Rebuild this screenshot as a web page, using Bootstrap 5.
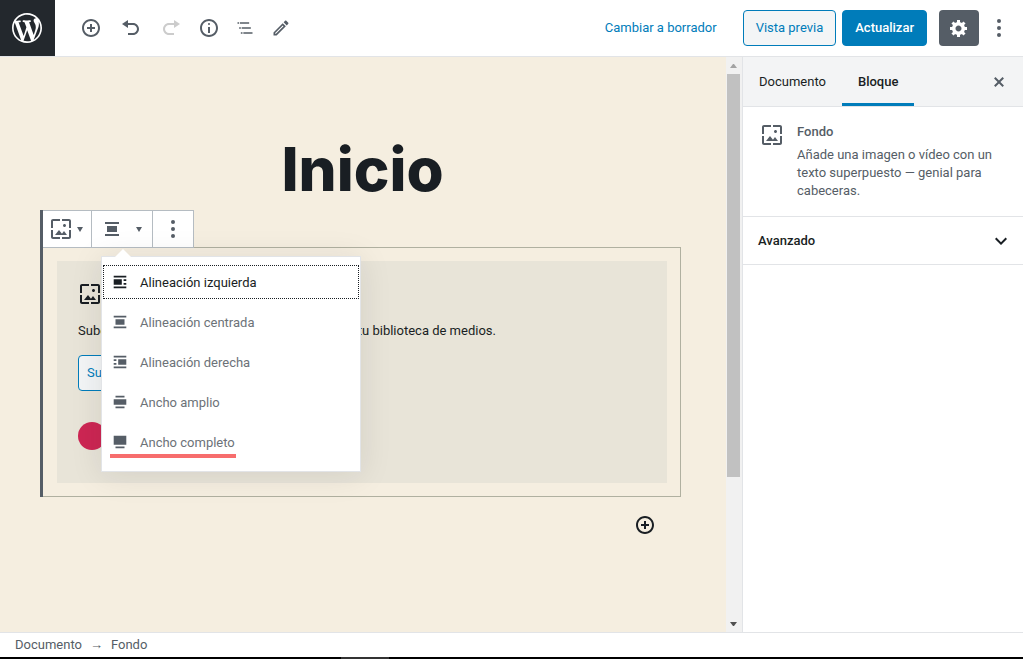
<!DOCTYPE html>
<html lang="es">
<head>
<meta charset="utf-8">
<meta name="viewport" content="width=device-width, initial-scale=1">
<title>Inicio – Editar página</title>
<link href="https://cdn.jsdelivr.net/npm/bootstrap@5.3.0/dist/css/bootstrap.min.css" rel="stylesheet">
<style>
  :root { --ink: #191e23; --slate: #555d66; --blue: #007cba; --line: #e2e4e7; --paper: #f5eee0; }
  body { font: 13px/18px Roboto, "Noto Sans", sans-serif; color: var(--slate); background: #fff; }
  svg { display: block; fill: currentColor; flex: none; }
  button { font: inherit; color: inherit; background: none; border: 0; padding: 0; }
  .topbar { height: 57px; border-bottom: 1px solid var(--line); }
  .wp-home { width: 55px; background: #23282d; color: #fff; padding-right: 2px; }
  .tools { padding-left: 18px; }
  .tools-edit { padding-right: 2px; }
  .tool { width: 36px; height: 36px; }
  .tool-faded { color: #ccc; }
  .head-actions { padding-right: 6px; }
  .head-btn { height: 36px; border-radius: 4px; padding: 0 12px; border: 1px solid var(--blue); }
  .head-btn.btn-preview { color: var(--blue); background: #f3f5f6; margin: 0 6px 0 26px; }
  .head-btn.btn-update { color: #fff; background: var(--blue); font-weight: 500; margin-right: 12px; }
  .gear { width: 40px; height: 36px; border-radius: 4px; background: var(--slate); color: #fff; margin-right: 2px; }
  .draft-link { color: var(--blue); }
  .canvas { background: var(--paper); padding: 76px 45px 0 40px; }
  .page-title { font: 800 60px/72px Inter, sans-serif; color: var(--ink); margin-bottom: 5px; padding-left: 4px; }
  .block-sel { border-left: 3px solid var(--slate); }
  .block-tools { height: 38px; background: #fff; border: 1px solid #b5bcc2; border-left: 0; margin-bottom: -1px; }
  .block-tools > * + * { border-left: 1px solid #b5bcc2; }
  .seg-type { width: 48px; padding-right: 2px; }
  .seg-align { width: 61px; }
  .seg-align > button { padding: 0 10px; }
  .seg-more { width: 41px; }
  .block-frame { border: 1px solid #b0b0a0; border-left: 0; padding: 13px 13px 13px 14px; }
  .cover-box { background: #e8e4d8; padding: 21px 21px 33px; color: var(--ink); }
  .cover-text { margin: 16px 0 15px; }
  .upload { height: 36px; border: 1px solid var(--blue); border-radius: 4px; background: #f3f5f6; color: var(--blue); padding: 0 8px; }
  .swatch { width: 28px; height: 28px; border-radius: 50%; background: #cd2653; margin-top: 31px; }
  .align-menu { top: 45px; left: 9px; width: 260px; padding: 8px 1px 12px; border: 1px solid var(--line); background: #fff; box-shadow: 0 3px 30px rgba(25,30,35,.1); z-index: 10; }
  .align-menu::before { content: ""; position: absolute; top: -8px; left: 13px; border: solid transparent; border-width: 0 8px 8px; border-bottom-color: #fff; }
  .align-list { row-gap: 6px; }
  .align-item { height: 34px; padding: 0 8px; color: #6c7278; text-align: left; }
  .align-item span { padding: 2px 0 0 3px; }
  .align-item svg { color: var(--slate); }
  .align-item.current, .align-item.current svg { color: var(--ink); }
  .align-item.current { outline: 1px dotted var(--ink); outline-offset: -1px; }
  .marked::after { content: ""; position: absolute; left: 7px; bottom: 1px; width: 126px; height: 4px; background: #f76d6d; }
  .adder { color: var(--ink); padding: 18px 26px 0 0; }
  .scroll-rail { width: 16px; background: #f1f1f1; padding: 0 2px 0 1px; }
  .scroll-end { height: 17px; color: #a3a3a3; }
  .scroll-end.down { color: #505050; }
  .thumb { height: 74.5%; background: #c1c1c1; }
  .side { width: 281px; border-left: 1px solid var(--line); }
  .side-tabs { height: 50px; background: #f3f4f5; border-bottom: 1px solid var(--line); color: var(--ink); }
  .side-tab { padding: 3px 16px 0; border-bottom: 3px solid transparent; }
  .side-tab.on { border-color: var(--blue); font-weight: 500; }
  .side-card { padding: 16px; border-bottom: 1px solid var(--line); }
  .side-card p { margin: 5px 0 0; }
  .side-card h2 { font-size: 13px; line-height: 18px; font-weight: 500; margin: 0; }
  .side-panel { height: 48px; padding: 0 10px 0 15px; border-bottom: 1px solid var(--line); color: var(--ink); font-weight: 500; }
  .crumbs { height: 25px; border-top: 1px solid var(--line); padding: 0 15px; }
  .taskbar { height: 2px; background: #000; }
  .taskbar span { width: 48px; margin-left: 33.3%; background: #333; }
</style>
</head>
<body class="vh-100 d-flex flex-column overflow-hidden">
<svg class="d-none" aria-hidden="true">
  <symbol id="cover" viewBox="0 0 24 24"><path d="M4 4h7V2H4c-1.1 0-2 .9-2 2v7h2V4zm6 9l-4 5h12l-3-4-2.03 2.71L10 13zm7-4.5c0-.83-.67-1.5-1.5-1.5S14 7.67 14 8.5s.67 1.5 1.5 1.5S17 9.33 17 8.5zM20 2h-7v2h7v7h2V4c0-1.1-.9-2-2-2zm0 18h-7v2h7c1.1 0 2-.9 2-2v-7h-2v7zM4 13H2v7c0 1.1.9 2 2 2h7v-2H4v-7z"/></symbol>
  <symbol id="insert" viewBox="0 0 20 20"><path d="M10 1c-5 0-9 4-9 9s4 9 9 9 9-4 9-9-4-9-9-9zm0 16c-3.9 0-7-3.1-7-7s3.1-7 7-7 7 3.1 7 7-3.1 7-7 7zm1-11H9v3H6v2h3v3h2v-3h3V9h-3V6z"/></symbol>
  <symbol id="center" viewBox="0 0 20 20"><path d="M3 5h14V3H3v2zm12 8V7H5v6h10zM3 17h14v-2H3v2z"/></symbol>
  <symbol id="dots" viewBox="0 0 20 20"><circle cx="10" cy="3" r="2"/><circle cx="10" cy="10" r="2"/><circle cx="10" cy="17" r="2"/></symbol>
  <symbol id="caret" viewBox="0 0 6 5"><path d="M0 0h6L3 5z"/></symbol>
</svg>

<header class="topbar d-flex flex-shrink-0">
  <a href="#" class="wp-home d-flex align-items-center justify-content-center" aria-label="Ver entradas"><svg width="36" height="36" viewBox="-2 -2 24 24"><path d="M20 10c0-5.51-4.49-10-10-10C4.48 0 0 4.49 0 10c0 5.52 4.48 10 10 10 5.51 0 10-4.48 10-10zM7.78 15.37L4.37 6.22c.55-.02 1.17-.08 1.17-.08.5-.06.44-1.13-.06-1.11 0 0-1.45.11-2.37.11-.18 0-.37 0-.58-.01C4.12 2.69 6.87 1.11 10 1.11c2.33 0 4.45.87 6.05 2.34-.68-.11-1.65.39-1.65 1.58 0 .74.45 1.36.9 2.1.35.61.55 1.36.55 2.46 0 1.49-1.4 5-1.4 5l-3.03-8.37c.54-.02.82-.17.82-.17.5-.05.44-1.25-.06-1.22 0 0-1.44.12-2.38.12-.87 0-2.33-.12-2.33-.12-.5-.03-.56 1.2-.06 1.22l.92.08 1.26 3.41zM17.41 10c.24-.64.74-1.87.43-4.25.7 1.29 1.05 2.71 1.05 4.25 0 3.29-1.73 6.24-4.4 7.78.97-2.59 1.94-5.2 2.92-7.78zM6.1 18.09C3.12 16.65 1.11 13.53 1.11 10c0-1.3.23-2.48.72-3.59C3.25 10.3 4.67 14.2 6.1 18.09zm4.03-6.63l2.58 6.98c-.86.29-1.76.45-2.71.45-.79 0-1.57-.11-2.29-.33.81-2.38 1.62-4.74 2.42-7.1z"/></svg></a>
  <div class="tools d-flex align-items-center flex-grow-1" role="toolbar" aria-label="Herramientas">
    <div class="tools-edit d-flex gap-1">
    <button class="tool d-flex align-items-center justify-content-center" aria-label="Añadir bloque"><svg width="20" height="20"><use href="#insert"/></svg></button>
    <button class="tool d-flex align-items-center justify-content-center" aria-label="Deshacer"><svg width="20" height="20" viewBox="0 0 20 20"><path d="M12 5H7V2L1 6l6 4V7h5c2.2 0 4 1.8 4 4s-1.8 4-4 4H7v2h5c3.3 0 6-2.7 6-6s-2.7-6-6-6z"/></svg></button>
    <button class="tool tool-faded d-flex align-items-center justify-content-center" aria-label="Rehacer"><svg width="20" height="20" viewBox="0 0 20 20"><path d="M8 5h5V2l6 4-6 4V7H8c-2.2 0-4 1.8-4 4s1.8 4 4 4h5v2H8c-3.3 0-6-2.7-6-6s2.7-6 6-6z"/></svg></button>
    </div>
    <button class="tool d-flex align-items-center justify-content-center" aria-label="Estructura"><svg width="20" height="20" viewBox="0 0 20 20"><path d="M9 15h2V9H9v6zm1-10c-.5 0-1 .5-1 1s.5 1 1 1 1-.5 1-1-.5-1-1-1zm0-4c-5 0-9 4-9 9s4 9 9 9 9-4 9-9-4-9-9-9zm0 16c-3.9 0-7-3.1-7-7s3.1-7 7-7 7 3.1 7 7-3.1 7-7 7z"/></svg></button>
    <button class="tool d-flex align-items-center justify-content-center" aria-label="Navegación"><svg width="20" height="20" viewBox="0 0 24 24"><path d="M5 5H3v2h2V5zm3 8h11v-2H8v2zm9-8H6v2h11V5zM7 11H5v2h2v-2zm0 8h2v-2H7v2zm3-2v2h11v-2H10z"/></svg></button>
    <button class="tool d-flex align-items-center justify-content-center" aria-label="Modos"><svg width="20" height="20" viewBox="0 0 24 24"><path d="M14.06 9.02l.92.92L5.92 19H5v-.92l9.06-9.06M17.66 3c-.25 0-.51.1-.7.29l-1.83 1.83 3.75 3.75 1.83-1.83c.39-.39.39-1.02 0-1.41l-2.34-2.34c-.2-.2-.45-.29-.71-.29zm-3.6 3.19L3 17.25V21h3.75L17.81 9.94l-3.75-3.75z"/></svg></button>
  </div>
  <div class="head-actions d-flex align-items-center">
    <a href="#" class="draft-link text-decoration-none">Cambiar a borrador</a>
    <button class="head-btn btn-preview">Vista previa</button>
    <button class="head-btn btn-update">Actualizar</button>
    <button class="gear d-flex align-items-center justify-content-center" aria-label="Ajustes"><svg width="20" height="20" viewBox="0 0 20 20"><path d="M18 12h-2.18c-.17.7-.44 1.35-.81 1.93l1.54 1.54-2.1 2.1-1.54-1.54c-.58.36-1.23.63-1.91.79V19H8v-2.18c-.68-.16-1.33-.43-1.91-.79l-1.54 1.54-2.12-2.12 1.54-1.54c-.36-.58-.63-1.23-.79-1.91H1V9.03h2.17c.16-.7.44-1.35.8-1.94L2.43 5.55l2.1-2.1 1.54 1.54c.58-.37 1.24-.64 1.93-.81V2h3v2.18c.68.16 1.33.43 1.91.79l1.54-1.54 2.12 2.12-1.54 1.54c.36.59.64 1.24.8 1.94H18V12zm-8.5 1.5c1.66 0 3-1.34 3-3s-1.34-3-3-3-3 1.34-3 3 1.34 3 3 3z"/></svg></button>
    <button class="tool d-flex align-items-center justify-content-center" aria-label="Más opciones"><svg width="20" height="20"><use href="#dots"/></svg></button>
  </div>
</header>

<div class="d-flex flex-grow-1 overflow-hidden">
  <main class="canvas flex-grow-1">
    <h1 class="page-title text-center">Inicio</h1>
    <section class="block-sel">
      <div class="block-tools d-inline-flex align-top position-relative" role="toolbar" aria-label="Bloque">
        <button class="seg-type d-flex align-items-center justify-content-center gap-1" aria-label="Cambiar bloque"><svg width="24" height="24"><use href="#cover"/></svg><svg width="6" height="5"><use href="#caret"/></svg></button>
        <div class="seg-align d-flex position-relative">
          <button class="d-flex align-items-center justify-content-between flex-grow-1" aria-expanded="true" aria-label="Cambiar alineación"><svg width="20" height="20"><use href="#center"/></svg><svg width="6" height="5"><use href="#caret"/></svg></button>
          <div class="align-menu position-absolute">
            <div class="align-list d-grid" role="menu">
            <button role="menuitem" class="align-item current d-flex align-items-center"><svg class="me-2" width="18" height="18" viewBox="0 0 20 20"><path d="M3 5h14V3H3v2zm9 8V7H3v6h9zm2-4h3V7h-3v2zm0 4h3v-2h-3v2zM3 17h14v-2H3v2z"/></svg><span>Alineación izquierda</span></button>
            <button role="menuitem" class="align-item d-flex align-items-center"><svg class="me-2" width="18" height="18"><use href="#center"/></svg><span>Alineación centrada</span></button>
            <button role="menuitem" class="align-item d-flex align-items-center"><svg class="me-2" width="18" height="18" viewBox="0 0 20 20"><path d="M3 5h14V3H3v2zm0 4h3V7H3v2zm14 4V7H8v6h9zM3 13h3v-2H3v2zm0 4h14v-2H3v2z"/></svg><span>Alineación derecha</span></button>
            <button role="menuitem" class="align-item d-flex align-items-center"><svg class="me-2" width="18" height="18" viewBox="0 0 20 20"><path d="M5 5h10V3H5v2zm12 8V7H3v6h14zM5 17h10v-2H5v2z"/></svg><span>Ancho amplio</span></button>
            <button role="menuitem" class="align-item marked position-relative d-flex align-items-center"><svg class="me-2" width="18" height="18" viewBox="0 0 20 20"><path d="M17 13V3H3v10h14zM5 17h10v-2H5v2z"/></svg><span>Ancho completo</span></button>
            </div>
          </div>
        </div>
        <button class="seg-more d-flex align-items-center justify-content-center" aria-label="Más opciones"><svg width="20" height="20"><use href="#dots"/></svg></button>
      </div>
      <div class="block-frame">
        <div class="cover-box">
          <svg width="24" height="24" role="img" aria-label="Fondo"><use href="#cover"/></svg>
          <p class="cover-text">Sube una imagen o un vídeo, o bien elige uno de tu biblioteca de medios.</p>
          <button class="upload d-block">Subir</button>
          <button class="swatch d-block" aria-label="Color: Acento"></button>
        </div>
      </div>
    </section>
    <div class="adder d-flex justify-content-end"><button aria-label="Añadir bloque"><svg width="20" height="20"><use href="#insert"/></svg></button></div>
  </main>
  <div class="scroll-rail d-flex flex-column flex-shrink-0" aria-hidden="true">
    <div class="scroll-end d-flex align-items-center justify-content-center"><svg width="7" height="4" viewBox="0 0 7 4"><path d="M0 4h7L4 0H3z"/></svg></div>
    <div class="flex-grow-1"><div class="thumb"></div></div>
    <div class="scroll-end down d-flex align-items-center justify-content-center"><svg width="7" height="4" viewBox="0 0 7 4"><path d="M0 0h7L4 4H3z"/></svg></div>
  </div>
  <aside class="side flex-shrink-0">
    <div class="side-tabs d-flex align-items-stretch">
      <button class="side-tab">Documento</button>
      <button class="side-tab on">Bloque</button>
      <button class="ms-auto me-3" aria-label="Cerrar ajustes"><svg width="16" height="20" viewBox="2 0 16 20"><path fill="#555d66" d="M14.95 6.46L11.41 10l3.54 3.54-1.41 1.41L10 11.42l-3.53 3.53-1.42-1.42L8.58 10 5.05 6.47l1.42-1.42L10 8.58l3.54-3.53z"/></svg></button>
    </div>
    <div class="side-card d-flex">
      <svg class="me-2" width="26" height="24"><use href="#cover"/></svg>
      <div class="ps-1"><h2>Fondo</h2><p>Añade una imagen o vídeo con un texto superpuesto — genial para cabeceras.</p></div>
    </div>
    <button class="side-panel w-100 d-flex align-items-center justify-content-between">Avanzado<svg width="24" height="24" viewBox="0 0 24 24"><path d="M7.41 8.59L12 13.17l4.59-4.58L18 10l-6 6-6-6 1.41-1.41z"/></svg></button>
  </aside>
</div>
<footer class="flex-shrink-0">
  <div class="crumbs d-flex align-items-center gap-2"><span>Documento</span><span>→</span><span>Fondo</span></div>
  <div class="taskbar d-flex"><span></span></div>
</footer>
<script src="https://cdn.jsdelivr.net/npm/bootstrap@5.3.0/dist/js/bootstrap.bundle.min.js"></script>
</body>
</html>
